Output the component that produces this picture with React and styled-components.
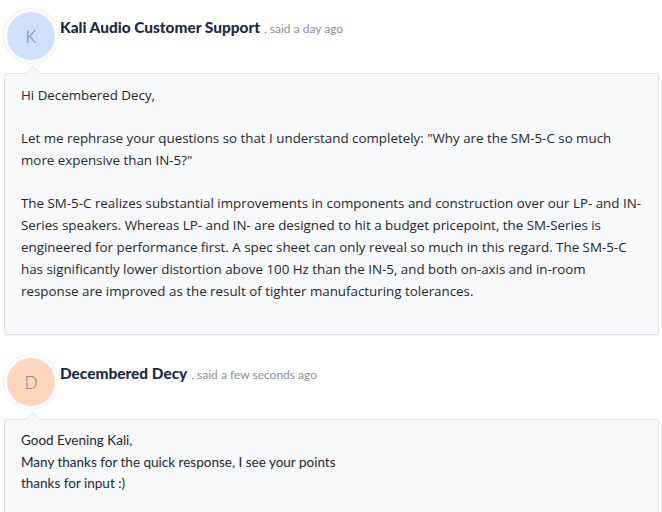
import React from "react";
import styled, { createGlobalStyle } from "styled-components";

const Global = createGlobalStyle`
  html, body { margin: 0; padding: 0; background: #ffffff; }
  body { font-family: "Open Sans", "Noto Sans", sans-serif; }
`;

const Thread = styled.div`
  display: flex;
  flex-direction: column;
  gap: 20px;
  padding: 9px 3px 0 4px;
`;

const Comment = styled.article`
  display: flex;
  flex-direction: column;
`;

const Header = styled.header`
  display: flex;
  align-items: flex-start;
  gap: 2px;
`;

const Avatar = styled.div`
  flex: none;
  width: 48px;
  height: 48px;
  border-radius: 50%;
  border: 3px solid #ffffff;
  box-shadow: 0 0 0 1px #eef0f3;
  background: ${(p) => p.$bg};
  color: #6d7f96;
  display: flex;
  align-items: center;
  justify-content: center;
  font-family: "Lato", sans-serif;
  font-weight: 300;
  font-size: 17px;
`;

const Meta = styled.div`
  padding-top: 9px;
  display: flex;
  align-items: baseline;
  white-space: nowrap;
`;

const Author = styled.span`
  font-family: "Lato", sans-serif;
  font-weight: 900;
  font-size: 15.4px;
  color: #1b2c42;
`;

const When = styled.span`
  font-family: "Lato", sans-serif;
  font-size: 12px;
  color: #8a919b;
  margin-left: 4px;
`;

const Bubble = styled.div`
  position: relative;
  margin-top: 10px;
  background: #f7f8fa;
  border: 1px solid #dde1e6;
  border-radius: 3px;
  box-shadow: 0 1px 1px rgba(0, 0, 0, 0.04);
  padding: ${(p) => p.$pad};
  color: #23292f;
  font-family: ${(p) => p.$font};
  font-size: ${(p) => p.$size};
  line-height: ${(p) => p.$lh};

  &::before,
  &::after {
    content: "";
    position: absolute;
    left: 21px;
    width: 0;
    height: 0;
    border-left: 7px solid transparent;
    border-right: 7px solid transparent;
  }
  &::before {
    top: -8px;
    border-bottom: 7px solid #dde1e6;
  }
  &::after {
    top: -7px;
    border-bottom: 7px solid #f7f8fa;
  }

  p { margin: 0; }
  p + p { margin-top: ${(p) => p.$gap}; }
`;

export default function App() {
  return (
    <>
      <Global />
      <Thread>
        <Comment>
          <Header>
            <Avatar $bg="#cfe0fc">K</Avatar>
            <Meta>
              <Author>Kali Audio Customer Support</Author>
              <When>, said a day ago</When>
            </Meta>
          </Header>
          <Bubble
            $pad="10px 15px 32px 16px"
            $font={'"Open Sans", sans-serif'}
            $size="13.35px"
            $lh="22px"
            $gap="21px"
          >
            <p>Hi Decembered Decy,</p>
            <p>
              Let me rephrase your questions so that I understand completely: "Why are the SM-5-C so much
              <br />
              more expensive than IN-5?"
            </p>
            <p>
              The SM-5-C realizes substantial improvements in components and construction over our LP- and IN-
              <br />
              Series speakers. Whereas LP- and IN- are designed to hit a budget pricepoint, the SM-Series is
              <br />
              engineered for performance first. A spec sheet can only reveal so much in this regard. The SM-5-C
              <br />
              has significantly lower distortion above 100 Hz than the IN-5, and both on-axis and in-room
              <br />
              response are improved as the result of tighter manufacturing tolerances.
            </p>
          </Bubble>
        </Comment>
        <Comment>
          <Header>
            <Avatar $bg="#fdd6bd">D</Avatar>
            <Meta>
              <Author>Decembered Decy</Author>
              <When>, said a few seconds ago</When>
            </Meta>
          </Header>
          <Bubble
            $pad="10px 16px 32px 16px"
            $font={'"Lato", sans-serif'}
            $size="13.5px"
            $lh="21.5px"
            $gap="0px"
          >
            <p>Good Evening Kali,</p>
            <p>Many thanks for the quick response, I see your points</p>
            <p>thanks for input :)</p>
          </Bubble>
        </Comment>
      </Thread>
    </>
  );
}
